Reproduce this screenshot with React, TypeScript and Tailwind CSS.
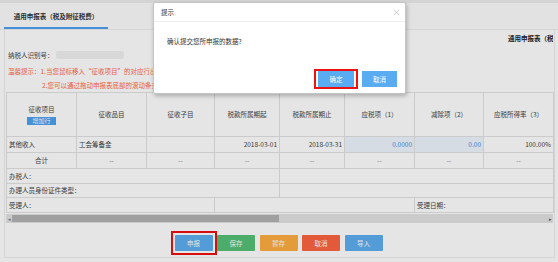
import { X } from 'lucide-react';

const COLS = [70, 70, 68, 65, 65, 70, 69, 70];

const HEADERS = ['征收品目', '征收子目', '税款所属期起', '税款所属期止', '应税项（1）', '减除项（2）', '应税所得率（3）'];

const BUTTONS = [
  { label: '申报', color: 'bg-[#5eaef0]', marked: true },
  { label: '保存', color: 'bg-[#55c077]', marked: false },
  { label: '暂存', color: 'bg-[#fdae40]', marked: false },
  { label: '取消', color: 'bg-[#fc6540]', marked: false },
  { label: '导入', color: 'bg-[#5eaef0]', marked: false },
];

const cell = 'border border-[#e3e3e3] px-[2px]';

export default function App() {
  return (
    <div className="relative h-[262px] w-[558px] overflow-hidden bg-white font-['Noto_Sans_CJK_SC',sans-serif] text-[6.5px] leading-none text-[#444]">
      {/* page */}
      <div className="h-[3px] bg-[#ececec]" />
      <div className="flex h-[27px] items-end border-b border-[#ececec] bg-[#fcfcfc] pl-[4px]">
        <div className="flex h-full w-[104px] items-center justify-center border-b-2 border-[#4d9ff2] pt-[2px] font-bold text-[#333]">
          通用申报表（税及附征税费）
        </div>
      </div>

      <div className="ml-[4px] flex h-[228px] w-[551px] flex-col border-x border-b border-[#ececec] px-[1px]">
        <div className="flex h-[16px] items-center overflow-hidden whitespace-nowrap pl-[502px] font-bold text-[#222]">
          通用申报表（税及附征税费）
        </div>
        <div className="flex h-[18px] items-center gap-[2px] pl-[2px]">
          <span>纳税人识别号：</span>
          <span className="h-[8px] w-[68px] rounded-[2px] bg-[#f1f1f1]" />
        </div>
        <div className="flex h-[15px] items-center whitespace-nowrap pl-[2px] text-[#ff6a4d]">
          温馨提示：1.当您鼠标移入“征收项目”的对应行出现提示时，可查看该征收项目的详细说明。
        </div>
        <div className="flex h-[13px] items-center whitespace-nowrap pl-[36px] text-[#ff6a4d]">
          2.您可以通过拖动申报表底部的滚动条查看申报表的全部内容。
        </div>

        <table className="w-[547px] table-fixed border-collapse">
          <colgroup>
            {COLS.map((w, i) => (
              <col key={i} style={{ width: w }} />
            ))}
          </colgroup>
          <tbody>
            <tr className="h-[44px] text-center">
              <td className={cell}>
                <div className="flex flex-col items-center gap-[4px] pt-[2px]">
                  <span>征收项目</span>
                  <span className="flex h-[8px] w-[29px] items-center justify-center bg-[#4da2f0] text-[6px] text-white">
                    增加行
                  </span>
                </div>
              </td>
              {HEADERS.map((h) => (
                <td key={h} className={cell}>
                  {h}
                </td>
              ))}
            </tr>
            <tr className="h-[16px]">
              <td className={cell}>其他收入</td>
              <td className={cell}>工会筹备金</td>
              <td className={cell} />
              <td className={`${cell} text-right`}>2018-03-01</td>
              <td className={`${cell} text-right`}>2018-03-31</td>
              <td className={`${cell} bg-[#eef5fd] text-right text-[#3c92ea]`}>0.0000</td>
              <td className={`${cell} bg-[#eef5fd] text-right text-[#3c92ea]`}>0.00</td>
              <td className={`${cell} text-right`}>100.00%</td>
            </tr>
            <tr className="h-[16px] text-center text-[#777]">
              <td className={`${cell} text-[#444]`}>合计</td>
              {COLS.slice(1).map((_, i) => (
                <td key={i} className={cell}>
                  --
                </td>
              ))}
            </tr>
            <tr className="h-[15px]">
              <td colSpan={4} className={cell}>
                办税人：
              </td>
              <td colSpan={4} className={cell} />
            </tr>
            <tr className="h-[14px]">
              <td colSpan={4} className={cell}>
                办理人员身份证件类型：
              </td>
              <td colSpan={4} className={cell} />
            </tr>
            <tr className="h-[15px]">
              <td colSpan={3} className={cell}>
                受理人：
              </td>
              <td colSpan={3} className={cell} />
              <td colSpan={2} className={cell}>
                受理日期：
              </td>
            </tr>
          </tbody>
        </table>

        {/* horizontal scrollbar */}
        <div className="mt-[1px] flex h-[9px] w-[547px] items-center bg-[#e3e3e3]">
          <span className="w-[6px] text-center text-[5px] text-[#777]">◂</span>
          <span className="h-[7px] w-[267px] bg-[#b3b3b3]" />
          <span className="flex-1" />
          <span className="w-[6px] text-center text-[5px] text-[#555]">▸</span>
        </div>

        <div className="mt-[12px] flex justify-center gap-[4.5px] pr-[2px]">
          {BUTTONS.map((b) => (
            <div
              key={b.label}
              className={`relative flex h-[16px] w-[38px] items-center justify-center rounded-[1px] text-white ${b.color}`}
            >
              {b.label}
              {b.marked && <span className="absolute -inset-[4px] border-2 border-[#ee1111]" />}
            </div>
          ))}
        </div>
      </div>

      {/* mask */}
      <div className="absolute inset-0 bg-black/10" />

      {/* dialog */}
      <div className="absolute left-[153px] top-[2px] flex h-[92px] w-[253px] flex-col rounded-[2px] border border-[#c4c4c4] bg-white shadow-[1px_2px_4px_rgba(0,0,0,0.25)]">
        <div className="flex h-[19px] items-center justify-between border-b border-[#eeeeee] pl-[7px] pr-[4px] text-[#333]">
          <span>提示</span>
          <X size={9} strokeWidth={1.2} className="text-[#999]" />
        </div>
        <div className="pl-[13px] pt-[16px] text-[#333]">确认提交您所申报的数据?</div>
        <div className="mt-auto flex justify-end gap-[8px] pb-[6px] pr-[8px]">
          <div className="relative flex h-[16px] w-[36px] items-center justify-center bg-[#5aacf2] text-white">
            确定
            <span className="absolute -inset-x-[4px] -inset-y-[2px] border-2 border-[#ee1111]" />
          </div>
          <div className="flex h-[16px] w-[35px] items-center justify-center bg-[#5aacf2] text-white">取消</div>
        </div>
      </div>
    </div>
  );
}
